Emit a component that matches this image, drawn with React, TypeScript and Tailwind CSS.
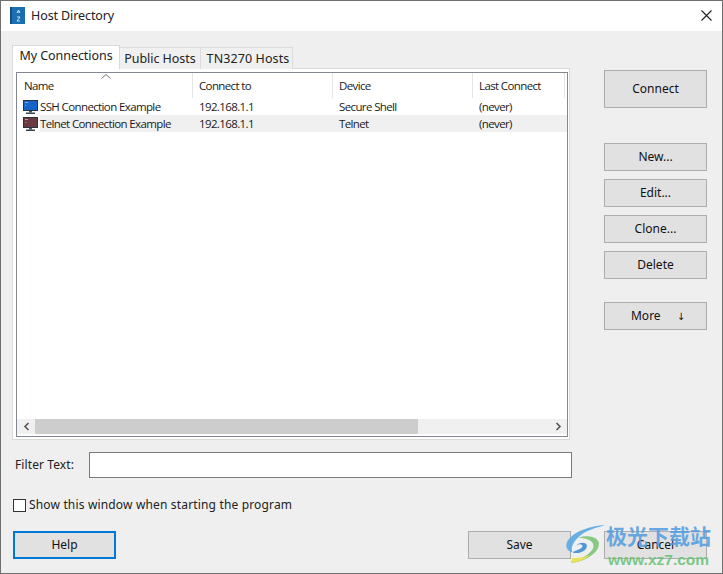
import React from "react";

const ui = "font-['Noto_Sans','Open_Sans',sans-serif]";
const cell = "font-['Open_Sans','Noto_Sans',sans-serif] text-[11.5px] tracking-[-0.62px] leading-[16px] text-[#1a1a1a]";

function Btn({ children, className = "", focused = false }: { children: React.ReactNode; className?: string; focused?: boolean }) {
  return (
    <div className={`w-[103px] flex items-center justify-center bg-[#e1e1e1] text-[12px] text-[#111] ${focused ? "border-2 border-[#0078d7]" : "border border-[#adadad]"} ${className}`}>
      {children}
    </div>
  );
}

function Monitor({ color }: { color: string }) {
  return (
    <svg width="15" height="14" viewBox="0 0 15 14" className="shrink-0">
      <rect x="0.5" y="0.5" width="14" height="10" fill={color} stroke="#2a3440" />
      <rect x="2" y="2" width="3" height="1" fill="#cfe0f5" opacity="0.6" />
      <rect x="2" y="5" width="1.5" height="1" fill="#cfe0f5" opacity="0.4" />
      <rect x="6" y="11" width="3" height="1.5" fill="#4a5460" />
      <rect x="3" y="12.5" width="9" height="1.5" fill="#3a4450" />
    </svg>
  );
}

const cols = [
  { label: "Name", w: "w-[175px]" },
  { label: "Connect to", w: "w-[140px]" },
  { label: "Device", w: "w-[140px]" },
  { label: "Last Connect", w: "w-[92px]" },
];

function Row({ color, name, device, selected }: { color: string; name: string; device: string; selected?: boolean }) {
  return (
    <div className={`flex h-[17px] items-center ${cell}`}>
      <div className="w-[175px] flex items-center pl-[6px] gap-[2px] h-full">
        <Monitor color={color} />
        <span className={`flex-1 h-full flex items-center ${selected ? "bg-[#f0f0f0]" : ""}`}>{name}</span>
      </div>
      <div className={`flex flex-1 h-full items-center ${selected ? "bg-[#f0f0f0]" : ""}`}>
        <div className="w-[140px] pl-[7px]">192.168.1.1</div>
        <div className="w-[140px] pl-[7px]">{device}</div>
        <div className="pl-[7px]">(never)</div>
      </div>
    </div>
  );
}

export default function App() {
  return (
    <div className={`relative w-[723px] h-[574px] flex flex-col bg-[#efefef] border border-[#6f6f6f] overflow-hidden ${ui}`}>
      {/* Title bar */}
      <div className="h-[30px] shrink-0 bg-white flex items-center pl-[9px] pr-[9px]">
        <svg width="15" height="17" viewBox="0 0 15 17" className="shrink-0 -mt-[1px]">
          <rect x="0" y="0" width="15" height="17" fill="#1b6fb0" />
          <rect x="0" y="0" width="2" height="17" fill="#0f4f85" />
          <path d="M7 6 L8.5 3 L10 6 M7.5 5 H9.5" stroke="#d6e8f6" strokeWidth="0.9" fill="none" />
          <path d="M7 10 H10 L7 14 H10" stroke="#d6e8f6" strokeWidth="0.9" fill="none" />
        </svg>
        <span className="ml-[6px] text-[12.5px] tracking-[-0.1px] text-[#222]">Host Directory</span>
        <svg width="13" height="13" viewBox="0 0 13 13" className="ml-auto -mt-[1px]" stroke="#222" strokeWidth="1.1">
          <path d="M1.5 1.5 L11.5 11.5 M11.5 1.5 L1.5 11.5" />
        </svg>
      </div>

      {/* Body */}
      <div className="flex flex-1 min-h-0">
        {/* Left */}
        <div className="w-[603px] pl-[11px] pt-[14px] flex flex-col">
          {/* Tabs */}
          <div className="flex items-end h-[24px] text-[12.5px] tracking-[-0.05px] text-[#222] relative z-10 -mb-px">
            <div className="w-[108px] h-[24px] bg-white border border-b-0 border-[#d9d9d9] flex items-center justify-center pb-[2px]">My Connections</div>
            <div className="w-[81px] h-[22px] bg-[#f0f0f0] border-r border-t border-[#dcdcdc] flex items-center justify-center pt-[2px]">Public Hosts</div>
            <div className="w-[92px] h-[22px] bg-[#f0f0f0] border-r border-t border-[#dcdcdc] flex items-center justify-center pt-[2px] pl-[3px] tracking-[0.1px]">TN3270 Hosts</div>
          </div>
          {/* Panel */}
          <div className="w-[558px] h-[372px] bg-white border border-[#d9d9d9] pt-[3px] pb-[2px] pl-[3px] pr-[1px]">
            <div className="h-full border border-[#828790] flex flex-col">
              <div className="relative flex h-[25px] shrink-0 pl-[1px]">
                {cols.map((c) => (
                  <div key={c.label} className={`${c.w} h-full border-r border-[#e5e5e5] last:border-r-0 flex items-end pb-[4px] pl-[6px] ${cell}`}>
                    {c.label}
                  </div>
                ))}
                <svg width="10" height="5" viewBox="0 0 10 5" className="absolute left-[84px] top-[1px]" fill="none" stroke="#777">
                  <path d="M0.5 4.5 L5 0.5 L9.5 4.5" />
                </svg>
              </div>
              <div className="flex-1 min-h-0">
                <Row color="#1565c8" name="SSH Connection Example" device="Secure Shell" />
                <Row color="#6b3a40" name="Telnet Connection Example" device="Telnet" selected />
              </div>
              {/* Scrollbar */}
              <div className="h-[15px] shrink-0 flex bg-[#f0f0f0] mb-[2px]">
                <div className="w-[18px] flex items-center justify-center">
                  <svg width="7" height="9" viewBox="0 0 7 9" fill="none" stroke="#555" strokeWidth="1.6"><path d="M5.5 1 L2 4.5 L5.5 8" /></svg>
                </div>
                <div className="w-[383px] bg-[#cdcdcd]" />
                <div className="flex-1" />
                <div className="w-[18px] flex items-center justify-center">
                  <svg width="7" height="9" viewBox="0 0 7 9" fill="none" stroke="#555" strokeWidth="1.6"><path d="M1.5 1 L5 4.5 L1.5 8" /></svg>
                </div>
              </div>
            </div>
          </div>
          {/* Filter */}
          <div className="flex items-center mt-[12px] h-[26px]">
            <span className="w-[77px] pl-[3px] text-[12px] text-[#222] tracking-[0.1px]">Filter Text:</span>
            <div className="w-[483px] h-[26px] bg-white border border-[#7a7a7a]" />
          </div>
          {/* Checkbox */}
          <div className="flex items-center mt-[19px] h-[16px] pl-px">
            <div className="w-[13px] h-[13px] bg-white border border-[#333]" />
            <span className="ml-[3px] text-[12px] text-[#222] tracking-[0.16px]">Show this window when starting the program</span>
          </div>
          {/* Bottom left */}
          <div className="flex justify-between mt-[18px] ml-px w-[558px]">
            <Btn focused className="h-[28px]">Help</Btn>
            <Btn className="h-[28px]">Save</Btn>
          </div>
        </div>

        {/* Right */}
        <div className="flex-1 flex flex-col pt-[39px]">
          <Btn className="h-[38px]">Connect</Btn>
          <div className="flex flex-col gap-[8px] mt-[35px]">
            <Btn className="h-[28px]">New...</Btn>
            <Btn className="h-[28px]">Edit...</Btn>
            <Btn className="h-[28px]">Clone...</Btn>
            <Btn className="h-[28px]">Delete</Btn>
          </div>
          <Btn className="h-[28px] mt-[23px] gap-[16px] pl-[5px]">
            <span>More</span>
            <span className="text-[10px] font-['DejaVu_Sans',sans-serif]">↓</span>
          </Btn>
          <Btn className="h-[28px] mt-auto mb-[14px]">Cancel</Btn>
        </div>
      </div>

      {/* Watermark */}
      <div className="absolute left-[562px] top-[523px] w-[46px] h-[40px] opacity-90">
        <svg width="46" height="40" viewBox="0 0 46 44" className="absolute left-0 top-0" fill="none">
          <path d="M44 1 C28 2 8 8 2 20 C0 26 3 30 8 31 C5 25 12 14 24 8 C30 5 38 3 44 1Z" fill="#5aa9e6" />
          <path d="M8 31 C14 34 24 30 24 24 C24 20 16 19 12 24 C15 21 20 22 19 25 C17 28 12 29 8 31Z" fill="#3f8fd6" />
          <path d="M15 15 C26 11 42 15 36 27 C31 36 18 42 6 43 C16 38 28 34 31 26 C33 19 24 15 15 15Z" fill="#7cc576" />
          <path d="M6 43 C14 42 22 39 28 34 C22 36 14 38 8 37 Z" fill="#e8e04a" />
        </svg>
      </div>
      <div className="absolute left-[605px] top-[521px] text-[21px] leading-[26px] whitespace-nowrap font-bold text-[#4f9be0]/85 font-['Noto_Sans_CJK_SC',sans-serif]">极光下载站</div>
      <div className="absolute left-[607px] top-[549px] text-[15.5px] leading-[20px] font-bold text-[#6cc27a]/90 font-['Liberation_Sans',sans-serif] whitespace-nowrap">www.xz7.com</div>
    </div>
  );
}
